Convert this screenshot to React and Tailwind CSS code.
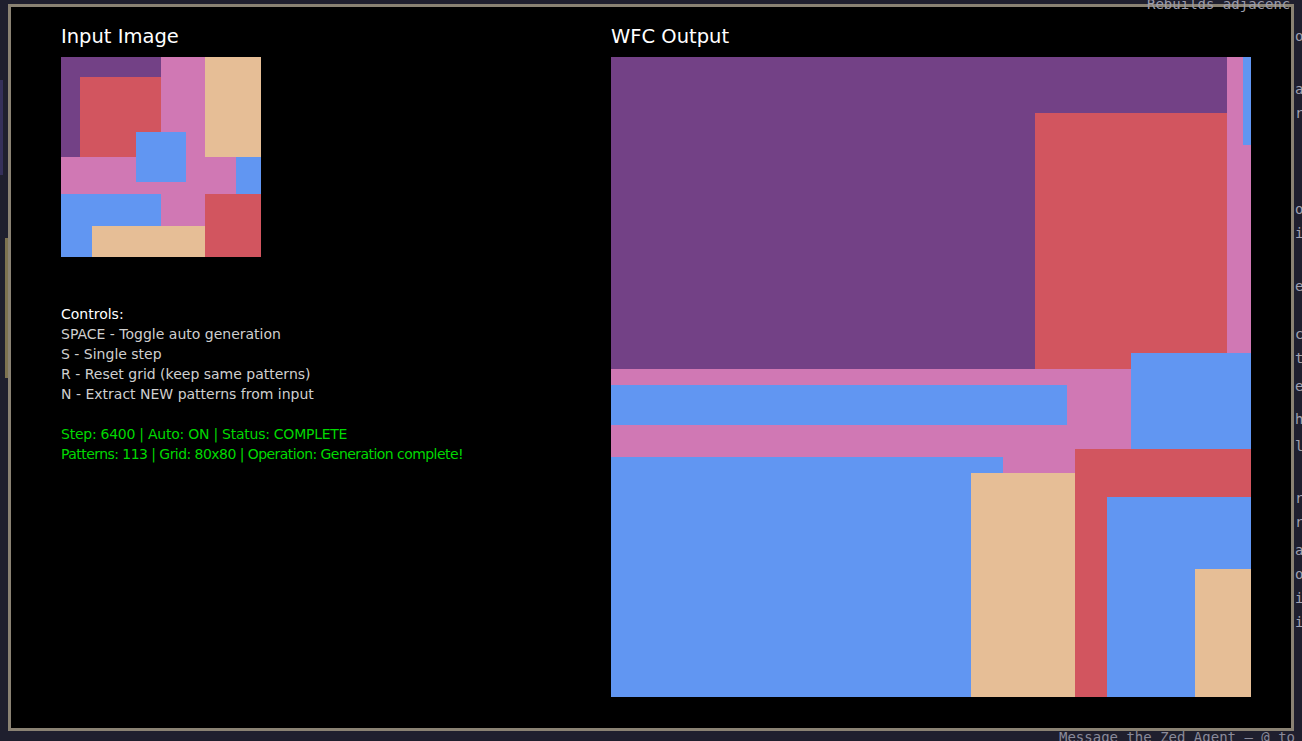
const C = {
  purple: '#734186',
  red: '#d2555f',
  pink: '#d078b4',
  beige: '#e6be96',
  blue: '#6196f2',
};

function InputImage() {
  return (
    <svg width="200" height="200" viewBox="0 0 200 200" className="block">
      <rect x="0" y="0" width="200" height="200" fill={C.pink} />
      <rect x="0" y="0" width="100" height="100" fill={C.purple} />
      <rect x="19" y="20" width="81" height="80" fill={C.red} />
      <rect x="144" y="0" width="56" height="100" fill={C.beige} />
      <rect x="75" y="75" width="50" height="50" fill={C.blue} />
      <rect x="175" y="100" width="25" height="37" fill={C.blue} />
      <rect x="0" y="137" width="100" height="63" fill={C.blue} />
      <rect x="144" y="137" width="56" height="63" fill={C.red} />
      <rect x="31" y="169" width="113" height="31" fill={C.beige} />
    </svg>
  );
}

function OutputImage() {
  return (
    <svg width="640" height="640" viewBox="0 0 640 640" className="block">
      <rect x="0" y="0" width="640" height="640" fill={C.pink} />
      <rect x="0" y="0" width="616" height="56" fill={C.purple} />
      <rect x="0" y="0" width="424" height="312" fill={C.purple} />
      <rect x="424" y="56" width="192" height="256" fill={C.red} />
      <rect x="632" y="0" width="8" height="88" fill={C.blue} />
      <rect x="0" y="328" width="456" height="40" fill={C.blue} />
      <rect x="520" y="296" width="120" height="96" fill={C.blue} />
      <rect x="464" y="392" width="176" height="248" fill={C.red} />
      <rect x="496" y="440" width="144" height="200" fill={C.blue} />
      <rect x="584" y="512" width="56" height="128" fill={C.beige} />
      <rect x="0" y="400" width="392" height="240" fill={C.blue} />
      <rect x="360" y="416" width="104" height="224" fill={C.beige} />
    </svg>
  );
}

// letters of the editor that peek out on the right of the window
const sideText = [
  ['o', 26], ['ac', 79], ['re', 103], ['o', 199], ['i', 223], ['e', 276],
  ['c', 324], ['t', 348], ['e', 376], ['h', 409], ['l', 436], ['r', 488],
  ['r', 512], ['a', 540], ['o', 564], ['i', 588], ['i', 612],
];

export default function App() {
  const mono = { fontFamily: '"DejaVu Sans Mono", "Liberation Mono", monospace' };
  return (
    <div className="relative w-[1302px] h-[741px] overflow-hidden bg-[#1f1f2e]">
      {/* editor behind the window */}
      {sideText.map(([t, y]) => (
        <div key={y} style={{ ...mono, top: y }} className="absolute left-[1295px] text-[14px] text-[#a2a2b0] whitespace-nowrap">
          {t}
        </div>
      ))}
      <div style={mono} className="absolute left-[1059px] top-[727px] text-[14px] text-[#8a8a9a] whitespace-nowrap">
        Message the Zed Agent — @ to
      </div>
      <div className="absolute left-0 top-[80px] w-[3px] h-[95px] bg-[#35305a]" />
      <div className="absolute left-[5px] top-[238px] w-[3px] h-[140px] bg-[#7d7250]" />

      {/* WFC window */}
      <div
        className="absolute left-[8px] top-[4px] w-[1286px] h-[727px] border-[3px] border-[#8a8273] bg-black"
        style={{ fontFamily: '"DejaVu Sans", "Noto Sans", sans-serif' }}
      >
        <div className="flex pl-[50px] pt-[18px]">
          <div className="w-[550px] shrink-0">
            <div className="h-[24px] leading-[24px] text-[19.5px] text-white mb-[8px]">Input Image</div>
            <InputImage />
            <div className="mt-[47px] text-[14px] leading-[20px] text-[#cfcfcf]">
              <div className="text-white">Controls:</div>
              <div>SPACE - Toggle auto generation</div>
              <div>S - Single step</div>
              <div>R - Reset grid (keep same patterns)</div>
              <div>N - Extract NEW patterns from input</div>
              <div className="h-[20px]" />
              <div className="text-[#00d800] tracking-[-0.25px]">Step: 6400 | Auto: ON | Status: COMPLETE</div>
              <div className="text-[#00d800] tracking-[-0.55px]">Patterns: 113 | Grid: 80x80 | Operation: Generation complete!</div>
            </div>
          </div>
          <div>
            <div className="h-[24px] leading-[24px] text-[19.5px] text-white mb-[8px]">WFC Output</div>
            <OutputImage />
          </div>
        </div>
      </div>
      <div style={mono} className="absolute left-[1147px] top-[-6px] text-[14px] text-[#9c9cab] whitespace-nowrap">
        Rebuilds adjacenc
      </div>
    </div>
  );
}
